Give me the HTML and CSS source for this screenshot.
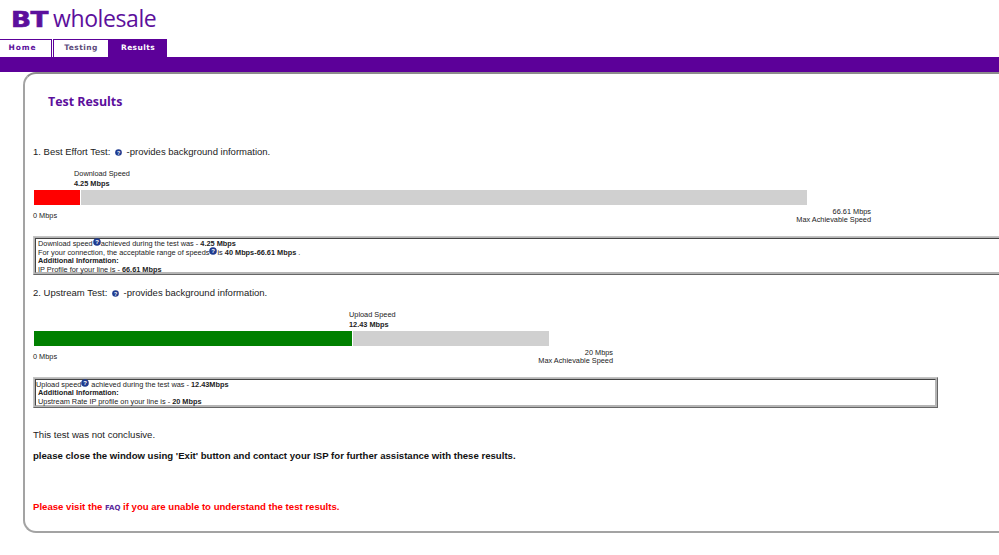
FILE: index.html
```html
<!DOCTYPE html>
<html lang="en">
<head>
<meta charset="utf-8">
<title>BT wholesale - Test Results</title>
<link rel="stylesheet" href="styles.css">
</head>
<body>
<header class="logo"><span class="logo-bt">BT</span><span class="logo-word">wholesale</span></header>
<nav class="tabs">
  <a class="tab tab-home">Home</a>
  <a class="tab tab-testing">Testing</a>
  <a class="tab tab-results">Results</a>
</nav>
<div class="band"></div>
<main class="card">
  <h1 class="title">Test Results</h1>

  <p class="heading heading-first">1. Best Effort Test: <svg class="help" viewBox="0 0 8 8"><circle cx="4" cy="4" r="3.8"/><text x="4" y="6.4" text-anchor="middle">?</text></svg> -provides background information.</p>
  <div class="marker" style="margin-left:41px"><div>Download Speed</div><b>4.25 Mbps</b></div>
  <div class="bar bar-long"><div class="fill fill-red" style="width:46px"></div><div class="rest"></div></div>
  <div class="scale scale-long"><span>0 Mbps</span><span class="scale-max">66.61 Mbps<br>Max Achievable Speed</span></div>
  <div class="box box-long"><div class="box-inner">
    <div class="line">Download speed<svg class="help help-sm" viewBox="0 0 8 8"><circle cx="4" cy="4" r="3.8"/><text x="4" y="6.4" text-anchor="middle">?</text></svg>achieved during the test was - <b>4.25 Mbps</b></div>
    <div class="line">For your connection, the acceptable range of speeds<svg class="help help-sm" viewBox="0 0 8 8"><circle cx="4" cy="4" r="3.8"/><text x="4" y="6.4" text-anchor="middle">?</text></svg>is <b>40 Mbps-66.61 Mbps</b> .</div>
    <div class="line"><b>Additional Information:</b></div>
    <div class="line">IP Profile for your line is - <b>66.61 Mbps</b></div>
  </div></div>

  <p class="heading heading-second">2. Upstream Test: <svg class="help" viewBox="0 0 8 8"><circle cx="4" cy="4" r="3.8"/><text x="4" y="6.4" text-anchor="middle">?</text></svg> -provides background information.</p>
  <div class="marker" style="margin-left:316px"><div>Upload Speed</div><b>12.43 Mbps</b></div>
  <div class="bar bar-short"><div class="fill fill-green" style="width:318px"></div><div class="rest"></div></div>
  <div class="scale scale-short"><span>0 Mbps</span><span class="scale-max">20 Mbps<br>Max Achievable Speed</span></div>
  <div class="box box-short"><div class="box-inner box-inner-short">
    <div class="line">Upload speed<svg class="help help-sm" viewBox="0 0 8 8"><circle cx="4" cy="4" r="3.8"/><text x="4" y="6.4" text-anchor="middle">?</text></svg> achieved during the test was - <b>12.43Mbps</b></div>
    <div class="line indent"><b>Additional Information:</b></div>
    <div class="line indent">Upstream Rate IP profile on your line is - <b>20 Mbps</b></div>
  </div></div>

  <p class="note">This test was not conclusive.</p>
  <p class="advice">please close the window using 'Exit' button and contact your ISP for further assistance with these results.</p>
  <p class="faq">Please visit the <a class="faq-link">FAQ</a> if you are unable to understand the test results.</p>
</main>
</body>
</html>
```
FILE: styles.css
```css
* { box-sizing: border-box; }
html, body { margin: 0; padding: 0; background: #fff; overflow: hidden; }
body { width: 999px; height: 555px; font-family: "Liberation Sans", Arial, sans-serif; color: #111; }

.logo { height: 39px; padding: 3px 0 0 11px; display: flex; align-items: baseline; color: #5c0f9c; white-space: nowrap; }
.logo-bt { font-family: "DejaVu Sans", sans-serif; font-weight: 700; font-size: 21px; line-height: 30px; letter-spacing: -.5px; transform: scaleX(1.25); transform-origin: left; width: 42px; -webkit-text-stroke: .6px #5c0f9c; }
.logo-word { font-family: "Open Sans", sans-serif; font-size: 23px; line-height: 30px; letter-spacing: -.4px; }

.tabs { display: flex; height: 19px; }
.tab { height: 18px; border: 1px solid #5c0099; border-bottom: 0; font-family: "DejaVu Sans", sans-serif; font-weight: 700; font-size: 7.5px; line-height: 16px; letter-spacing: .4px; text-align: center; color: #5c0f9c; }
.tab-home { width: 52px; border-left: 0; padding-right: 6px; letter-spacing: .9px; margin-right: 1px; }
.tab-testing { width: 56px; color: #5c4a7a; }
.tab-results { width: 58px; height: 19px; background: #5c0099; color: #fff; }

.band { height: 15px; background: #5c0099; margin-top: -1px; }

.card { margin-left: 23px; margin-right: -20px; height: 461px; border: 2px solid #a3a3a3; border-right: 0; border-top-color: #8c8c8c; border-radius: 13px 0 0 13px; padding: 0 0 0 8px; }
.title { margin: 19px 0 0 15px; font-family: "Open Sans", sans-serif; font-size: 12.4px; line-height: 18px; font-weight: 700; color: #5c0f9c; }

.heading { margin: 0; font-size: 9.5px; line-height: 14px; white-space: nowrap; color: #222; }
.heading-first { margin-top: 34px; }
.heading-second { margin-top: 11px; }

.help { width: 7px; height: 7px; margin: 0 2px; vertical-align: -0.5px; }
.help circle { fill: #1f3b8f; }
.help text { font: 700 6px "Liberation Sans", sans-serif; fill: #fff; }
.help-sm { width: 8px; height: 8px; margin: 0; vertical-align: 0; }

.marker { margin-top: 10px; font-size: 7.35px; line-height: 10px; color: #222; }
.bar { display: flex; height: 15px; gap: 1px; margin: 1px 0 0 1px; }
.bar-long { width: 773px; }
.bar-short { width: 515px; }
.fill-red { background: #f00; }
.fill-green { background: #008000; }
.rest { flex: 1; background: #d0d0d0; }

.scale { display: flex; justify-content: space-between; align-items: center; font-size: 7.35px; line-height: 8px; color: #222; margin-top: 3px; }
.scale-long { width: 838px; }
.scale-short { width: 580px; }
.scale-max { text-align: right; }

.box { border: 1px solid; border-color: #c4c4c4 #666 #666 #c4c4c4; padding: 1px; background: #b5b5b5; margin-top: 12px; }
.box-long { width: 990px; height: 39px; }
.box-short { width: 905px; height: 31px; }
.box-inner { height: 100%; border: 1px solid; border-color: #444 #b5b5b5 #b5b5b5 #444; background: #fff; padding: 0 0 0 2px; font-size: 7.35px; color: #222; white-space: nowrap; }
.box-inner-short { padding-left: 0; }
.line { height: 9px; line-height: 9px; }
.line:first-child { margin-top: -1px; }
.indent { padding-left: 2px; }

.note { margin: 20px 0 0; font-size: 9.6px; line-height: 14px; color: #222; }
.advice { margin: 7px 0 0; font-size: 9.6px; line-height: 14px; font-weight: 700; color: #111; }
.faq { margin: 37px 0 0; font-size: 9.6px; line-height: 14px; font-weight: 700; color: #f00; }
.faq-link { font-family: "DejaVu Sans", sans-serif; font-size: 7px; color: #5c2a9c; }
```
